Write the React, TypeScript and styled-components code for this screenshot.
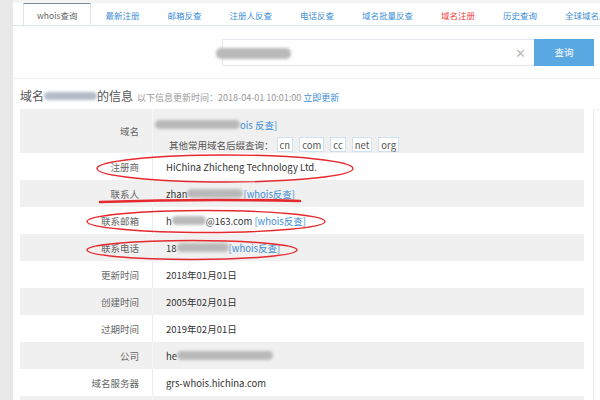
import React from "react";
import styled, { createGlobalStyle } from "styled-components";

const Global = createGlobalStyle`
  html, body { margin: 0; padding: 0; background: #fff; }
  body { font-family: "Noto Sans CJK SC", "Noto Sans", sans-serif; overflow: hidden; }
  * { box-sizing: border-box; }
`;

const Page = styled.div`
  position: relative;
  display: flex;
  width: 600px;
  height: 400px;
  overflow: hidden;
`;

const LeftStrip = styled.div`
  width: 13px;
  flex: none;
  background: #e8e8e8;
`;

const Main = styled.div`
  flex: 1;
  display: flex;
  flex-direction: column;
  min-width: 0;
  border-top: 3px solid #f4f4f4;
  & > * { flex-shrink: 0; }
`;

const TabBar = styled.div`
  display: flex;
  height: 23px;
  padding-left: 10px;
  border-bottom: 1px solid #dfe5ec;
  white-space: nowrap;
  overflow: hidden;
`;

const Tab = styled.div<{ $active?: boolean; $red?: boolean }>`
  display: flex;
  align-items: center;
  padding: 0 13px;
  height: ${(p) => (p.$active ? "23px" : "22px")};
  font-size: 8.5px;
  color: ${(p) => (p.$active ? "#666" : p.$red ? "#f23a3a" : "#3d8ed6")};
  background: #fff;
  border-top: 1px solid ${(p) => (p.$active ? "#7d8a98" : "transparent")};
  border-left: 1px solid ${(p) => (p.$active ? "#dfe5ec" : "transparent")};
  border-right: 1px solid ${(p) => (p.$active ? "#dfe5ec" : "transparent")};
  margin-bottom: ${(p) => (p.$active ? "-1px" : "0")};
  flex: none;
`;

const SearchArea = styled.div`
  height: 53px;
  display: flex;
  align-items: center;
  padding-left: 209px;
  border-bottom: 1px solid #eeeeee;
`;

const InputBox = styled.div`
  position: relative;
  width: 312px;
  height: 27px;
  border: 1px solid #e2e6ee;
  border-right: none;
  display: flex;
  align-items: center;
  justify-content: flex-end;
  padding-right: 8px;
  background: #fff;
`;

const Clear = styled.span`
  font-size: 13px;
  color: #bbbbbb;
  line-height: 1;
`;

const SearchButton = styled.div`
  width: 60px;
  height: 27px;
  background: #5aa8e2;
  color: #fff;
  font-size: 9.5px;
  display: flex;
  align-items: center;
  justify-content: center;
  flex: none;
`;

const Smudge = styled.span<{ $w: number; $h?: number; $c?: string }>`
  display: inline-block;
  width: ${(p) => p.$w}px;
  height: ${(p) => p.$h ?? 9}px;
  background: ${(p) => p.$c ?? "#b9b9b9"};
  border-radius: 5px;
  filter: blur(1.6px);
  vertical-align: middle;
`;

const InputSmudge = styled(Smudge)`
  position: absolute;
  left: -7px;
  top: 8px;
`;

const TitleRow = styled.div`
  display: flex;
  align-items: baseline;
  height: 30px;
  padding: 9px 0 0 7px;
  white-space: nowrap;
`;

const Title = styled.span`
  font-size: 12px;
  line-height: 16px;
  color: #555;
  display: inline-flex;
  align-items: center;
`;

const Sub = styled.span`
  font-size: 9px;
  color: #999;
  margin-left: 4px;
`;

const Link = styled.span`
  color: #3d8ed6;
`;

const Content = styled.div`
  display: flex;
  padding-left: 7px;
  gap: 9px;
  flex: 1;
`;

const Table = styled.div`
  width: 564px;
  flex: none;
  display: flex;
  flex-direction: column;
`;

const Row = styled.div<{ $gray: boolean; $tall?: boolean }>`
  display: flex;
  height: ${(p) => (p.$tall ? 44 : 27)}px;
  flex: none;
  background: ${(p) => (p.$gray ? "#f0f0f0" : "#fff")};
  font-size: 9.5px;
`;

const Label = styled.div<{ $gray: boolean }>`
  width: 133px;
  flex: none;
  display: flex;
  align-items: center;
  justify-content: flex-end;
  padding-right: 13px;
  color: #666;
  border-right: 1px solid ${(p) => (p.$gray ? "#f7f7f7" : "#ececec")};
`;

const Value = styled.div`
  flex: 1;
  display: flex;
  align-items: center;
  padding-left: 13px;
  color: #333;
  white-space: nowrap;
`;

const StackValue = styled(Value)`
  flex-direction: column;
  align-items: flex-start;
  justify-content: flex-start;
  gap: 5px;
  padding-left: 2px;
  padding-top: 8px;
`;

const Line = styled.div`
  display: flex;
  align-items: center;
  height: 15px;
`;

const SuffixLabel = styled.span`
  color: #555;
  margin-left: 14px;
  margin-right: 3px;
`;

const SuffixBox = styled.span`
  display: inline-flex;
  align-items: center;
  height: 15px;
  padding: 0 2px;
  margin-right: 6px;
  background: #fff;
  border: 1px solid #cfe1f1;
  color: #555;
`;

const RightPanel = styled.div`
  flex: 1;
  background: #fff;
  border-left: 1px solid #ececec;
  border-top: 1px solid #f2f2f2;
`;

const Overlay = styled.svg`
  position: absolute;
  left: 0;
  top: 0;
  pointer-events: none;
`;

const rows: { label: string; value: React.ReactNode }[] = [
  { label: "注册商", value: "HiChina Zhicheng Technology Ltd." },
  {
    label: "联系人",
    value: (
      <>
        zhan<Smudge $w={56} />
        <Link>[whois反查]</Link>
      </>
    ),
  },
  {
    label: "联系邮箱",
    value: (
      <>
        h<Smudge $w={34} />
        @163.com&nbsp;<Link>[whois反查]</Link>
      </>
    ),
  },
  {
    label: "联系电话",
    value: (
      <>
        18<Smudge $w={52} />
        <Link>[whois反查]</Link>
      </>
    ),
  },
  { label: "更新时间", value: "2018年01月01日" },
  { label: "创建时间", value: "2005年02月01日" },
  { label: "过期时间", value: "2019年02月01日" },
  {
    label: "公司",
    value: (
      <>
        he<Smudge $w={96} />
      </>
    ),
  },
  { label: "域名服务器", value: "grs-whois.hichina.com" },
];

const tabs = [
  "whois查询",
  "最新注册",
  "邮箱反查",
  "注册人反查",
  "电话反查",
  "域名批量反查",
  "域名注册",
  "历史查询",
  "全球域名后缀",
];

export default function App() {
  return (
    <>
      <Global />
      <Page>
        <LeftStrip />
        <Main>
          <TabBar>
            {tabs.map((t, i) => (
              <Tab key={t} $active={i === 0} $red={t === "域名注册"}>
                {t}
              </Tab>
            ))}
          </TabBar>
          <SearchArea>
            <InputBox>
              <InputSmudge $w={75} $h={11} />
              <Clear>✕</Clear>
            </InputBox>
            <SearchButton>查询</SearchButton>
          </SearchArea>
          <TitleRow>
            <Title>
              域名
              <Smudge $w={53} $h={8} $c="#b4bcc8" />
              的信息
            </Title>
            <Sub>
              以下信息更新时间：2018-04-01 10:01:00 <Link>立即更新</Link>
            </Sub>
          </TitleRow>
          <Content>
            <Table>
              <Row $gray $tall>
                <Label $gray>域名</Label>
                <StackValue>
                  <Line>
                    <Smudge $w={85} />
                    <Link>ois 反查]</Link>
                  </Line>
                  <Line>
                    <SuffixLabel>其他常用域名后缀查询：</SuffixLabel>
                    {["cn", "com", "cc", "net", "org"].map((s) => (
                      <SuffixBox key={s}>{s}</SuffixBox>
                    ))}
                  </Line>
                </StackValue>
              </Row>
              {rows.map((r, i) => (
                <Row key={r.label} $gray={i % 2 === 1}>
                  <Label $gray={i % 2 === 1}>{r.label}</Label>
                  <Value>{r.value}</Value>
                </Row>
              ))}
              <Row $gray>
                <Label $gray />
                <Value />
              </Row>
            </Table>
            <RightPanel />
          </Content>
        </Main>
        <Overlay width="600" height="400" viewBox="0 0 600 400">
          <g fill="none" stroke="#e52a2f" strokeWidth="1.4">
            <ellipse cx="225" cy="168.5" rx="128" ry="13.5" />
            <ellipse cx="206" cy="221.5" rx="119" ry="11" />
            <ellipse cx="192" cy="250" rx="105" ry="9.5" />
          </g>
          <path
            d="M100 202 Q200 198.5 300 201"
            fill="none"
            stroke="#e52a2f"
            strokeWidth="2.6"
            strokeLinecap="round"
          />
        </Overlay>
      </Page>
    </>
  );
}
